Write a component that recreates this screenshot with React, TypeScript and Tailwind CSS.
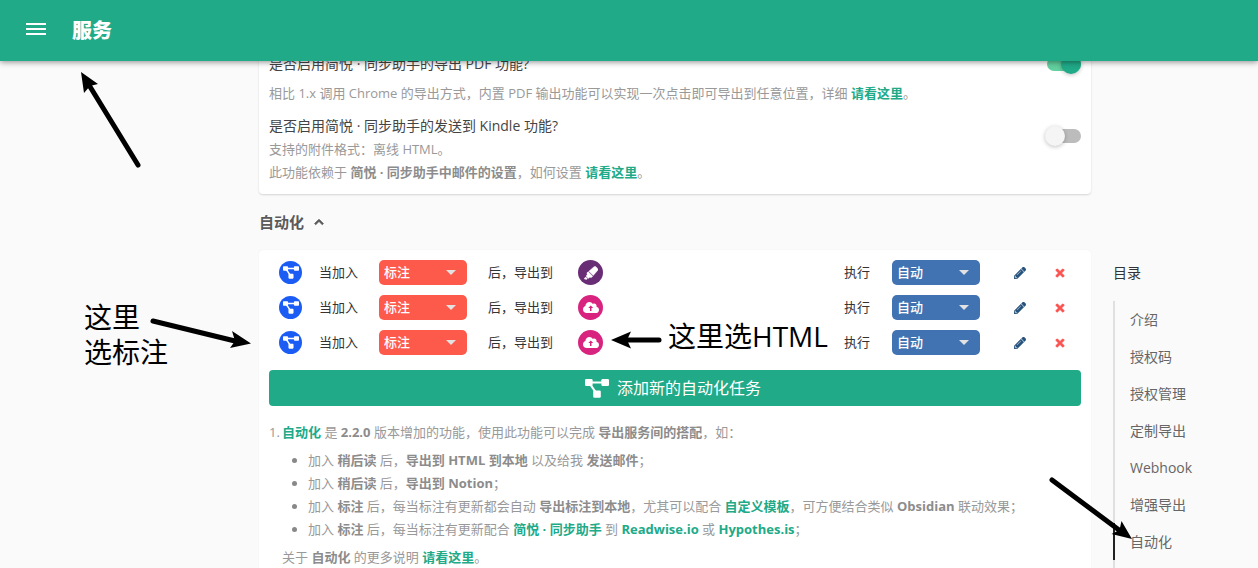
import type { ReactNode } from "react";
import { FaChevronUp, FaHighlighter, FaPencilAlt, FaTimes } from "react-icons/fa";

const tocItems = ["介绍", "授权码", "授权管理", "定制导出", "Webhook", "增强导出", "自动化"];

function FlowIcon({ className }: { className: string }) {
  return (
    <svg viewBox="0 0 24 19" className={className} fill="currentColor" stroke="currentColor" strokeWidth="0">
      <rect width="7.6" height="7" rx="1.2" />
      <rect x="16.4" width="7.6" height="7" rx="1.2" />
      <rect x="8.2" y="11.500" width="7.6" height="7.200" rx="1.2" />
      <path d="M6 3.500h12M5 5l5.500 8" strokeWidth="2.2" />
    </svg>
  );
}

function CloudIcon() {
  return (
    <svg viewBox="0 0 640 512" className="h-[13px] w-4">
      <path
        fill="currentColor"
        d="M537.6 226.6c4.1-10.7 6.4-22.4 6.4-34.6 0-53-43-96-96-96-19.7 0-38.1 6-53.3 16.2C367 64.2 315.3 32 256 32c-88.4 0-160 71.6-160 160 0 2.7.1 5.4.2 8.1C40.2 219.8 0 273.2 0 336c0 79.5 64.5 144 144 144h368c70.7 0 128-57.3 128-128 0-61.9-44-113.6-102.4-125.4z"
      />
      <path fill="#d8247f" d="M310 180l100 100h-70v120h-60V280h-70z" />
    </svg>
  );
}

function B({ children }: { children: ReactNode }) {
  return <b className="font-bold text-[#8c8c8c]">{children}</b>;
}

function Link({ children }: { children: ReactNode }) {
  return (
    <a href="#more" className="font-bold text-[#20aa88]">
      {children}
    </a>
  );
}

function Toggle({ id, on }: { id: string; on?: boolean }) {
  return (
    <span className="relative flex h-5 w-9 shrink-0 items-center justify-end">
      <input
        id={id}
        type="checkbox"
        role="switch"
        defaultChecked={on}
        className="peer h-3.5 w-[34px] appearance-none rounded-full bg-[#bcbcbc] checked:bg-[#62d09f]"
      />
      <span className="pointer-events-none absolute left-0 top-0 size-5 rounded-full bg-[#f5f5f5] shadow-[0_1px_4px_rgba(0,0,0,0.25)] peer-checked:left-4 peer-checked:bg-[#20aa88]" />
    </span>
  );
}

function Picker({ label, value, options, tone }: { label: string; value: string; options: string[]; tone: string }) {
  return (
    <span className={`relative h-[25px] w-[88px] shrink-0 rounded-[5px] ${tone}`}>
      <select
        aria-label={label}
        defaultValue={value}
        className="block h-full w-full appearance-none pl-[5px] pr-6 text-[13px] font-medium text-white"
      >
        {options.map((o) => (
          <option key={o}>{o}</option>
        ))}
      </select>
      <svg viewBox="0 0 10 5" className="pointer-events-none absolute right-[11px] top-2.5 h-[5px] w-2.5 fill-[#e2e2e2]">
        <path d="M0 0h10L5 5z" />
      </svg>
    </span>
  );
}

function TaskRow({ target }: { target: "note" | "cloud" }) {
  return (
    <li className="flex h-[25px] items-center pl-2.5">
      <span className="flex size-[23px] items-center justify-center rounded-full bg-[#1b5cf5] text-white">
        <FlowIcon className="h-[13px] w-4" />
      </span>
      <span className="ml-[17px] w-[60px]">当加入</span>
      <Picker label="加入类型" value="标注" options={["标注", "稍后读"]} tone="bg-[#fd5a4b]" />
      <span className="ml-[21px] w-[90px]">后，导出到</span>
      {target === "note" ? (
        <button aria-label="标注" className="flex size-[25px] items-center justify-center rounded-full bg-[#692d76] text-white">
          <FaHighlighter className="size-3.5" strokeWidth={16} />
        </button>
      ) : (
        <button aria-label="HTML" className="flex size-[25px] items-center justify-center rounded-full bg-[#d8247f] text-white">
          <CloudIcon />
        </button>
      )}
      <span className="ml-auto w-12">执行</span>
      <Picker label="执行方式" value="自动" options={["自动", "手动"]} tone="bg-[#4172b1]" />
      <button aria-label="编辑" className="ml-[34px] text-[#27547d]">
        <FaPencilAlt className="size-3" strokeWidth={16} />
      </button>
      <button aria-label="删除" className="ml-7 mr-[15px] text-[#fb5250]">
        <FaTimes className="size-3" strokeWidth={28} />
      </button>
    </li>
  );
}

function Annotations() {
  return (
    <div className="pointer-events-none absolute inset-0 z-20 text-[28px] leading-[35px] text-black">
      <svg width="1258" height="568" className="absolute left-0 top-0" stroke="#000" strokeWidth="5" strokeLinecap="round">
        <path d="M138 165 89 85" />
        <path d="M81 72l17 12-8 2-6 7z" strokeWidth="0" />
        <path d="M153 321l82 20" />
        <path d="M251 343.500l-21 4.500 5-7-3-10z" strokeWidth="0" />
        <path d="M659 340h-31" />
        <path d="M611 340l20-8.500-4 8.500 4 8.500z" strokeWidth="0" />
        <path d="M1052 480l67 50" />
        <path d="M1132 539l-20.500-5 8-4 2-9z" strokeWidth="0" />
      </svg>
      <p className="absolute left-[84px] top-[300px] whitespace-nowrap">
        这里
        <br />
        选标注
      </p>
      <p className="absolute left-[668px] top-[319px] whitespace-nowrap">这里选HTML</p>
    </div>
  );
}

export default function App() {
  return (
    <div className="relative h-screen overflow-hidden bg-[#fafafa] font-['Open_Sans','Noto_Sans_CJK_SC',sans-serif] text-[13px] leading-[23px] text-[#333]">
      <header className="absolute inset-x-0 top-0 z-10 flex h-[61px] items-center bg-[#20aa88] pl-[26px] text-white shadow-[0_1px_6px_rgba(0,0,0,0.45)]">
        <button aria-label="菜单" className="flex w-5 flex-col gap-[3px] pb-1">
          <span className="h-0.5 bg-white" />
          <span className="h-0.5 bg-white" />
          <span className="h-0.5 bg-white" />
        </button>
        <h1 className="ml-[26px] text-xl font-black">服务</h1>
      </header>

      <div className="flex pl-[259px] pt-[52px]">
        <main className="min-w-0 flex-1">
          <section className="rounded-b-sm bg-white px-2.5 pb-2.5 text-[#999] shadow-[0_1px_2px_rgba(0,0,0,0.15)]">
            <div className="flex items-center justify-between">
              <label htmlFor="pdf" className="text-sm leading-6 text-[#444]">
                是否启用简悦 · 同步助手的导出 PDF 功能?
              </label>
              <Toggle id="pdf" on />
            </div>
            <p className="mt-1.5">
              相比 1.x 调用 Chrome 的导出方式，内置 PDF 输出功能可以实现一次点击即可导出到任意位置，详细 <Link>请看这里</Link>。
            </p>
            <div className="mt-[9px] flex justify-between">
              <div>
                <label htmlFor="kindle" className="block text-sm leading-6 text-[#444]">
                  是否启用简悦 · 同步助手的发送到 Kindle 功能?
                </label>
                <p>支持的附件格式：离线 HTML。</p>
                <p>
                  此功能依赖于 <B>简悦 · 同步助手中邮件的设置</B>，如何设置 <Link>请看这里</Link>。
                </p>
              </div>
              <div className="pt-3">
                <Toggle id="kindle" />
              </div>
            </div>
          </section>

          <h2 className="flex h-14 items-center gap-2.5 text-[15px] font-bold text-[#5a5a5a]">
            自动化
            <button aria-label="收起">
              <FaChevronUp className="size-2.5" strokeWidth={40} />
            </button>
          </h2>

          <section className="rounded-sm bg-white px-2.5 pb-12 pt-2.5 shadow-[0_0_1px_rgba(0,0,0,0.1)]">
            <ul className="flex flex-col gap-2.5">
              <TaskRow target="note" />
              <TaskRow target="cloud" />
              <TaskRow target="cloud" />
            </ul>
            <button className="mt-[15px] flex h-9 w-full items-center justify-center gap-2 rounded-sm bg-[#20aa88] pr-1 text-base text-white">
              <FlowIcon className="h-[19px] w-6" />
              添加新的自动化任务
            </button>

            <div className="mt-[15px] flex whitespace-nowrap text-[#999]">
              <span className="w-[13px]">1.</span>
              <div>
                <p>
                  <Link>自动化</Link> 是 <B>2.2.0</B> 版本增加的功能，使用此功能可以完成 <B>导出服务间的搭配</B>，如：
                </p>
                <ul className="my-[5px] list-disc pl-[26px] marker:text-[#888]">
                  <li>
                    加入 <B>稍后读</B> 后，<B>导出到 HTML 到本地</B> 以及给我 <B>发送邮件</B>；
                  </li>
                  <li>
                    加入 <B>稍后读</B> 后，<B>导出到 Notion</B>；
                  </li>
                  <li>
                    加入 <B>标注</B> 后，每当标注有更新都会自动 <B>导出标注到本地</B>，尤其可以配合 <Link>自定义模板</Link>，可方便结合类似 <B>Obsidian</B> 联动效果；
                  </li>
                  <li>
                    加入 <B>标注</B> 后，每当标注有更新配合 <Link>简悦 · 同步助手</Link> 到 <Link>Readwise.io</Link> 或 <Link>Hypothes.is</Link>；
                  </li>
                </ul>
                <p>
                  关于 <B>自动化</B> 的更多说明 <Link>请看这里</Link>。
                </p>
              </div>
            </div>
          </section>
        </main>

        <nav aria-label="目录" className="ml-[22px] w-[145px] shrink-0 pt-[209px] text-sm">
          <h2 className="mb-[17px] leading-[23px] text-[#333]">目录</h2>
          <ul>
            {tocItems.map((item, i) => (
              <li
                key={item}
                className={`flex h-[37px] items-center border-l-2 pl-[15px] ${
                  i === tocItems.length - 1 ? "border-[#222]" : "border-[#e0e0e0]"
                }`}
              >
                <a href="#toc" className="text-[#666]">
                  {item}
                </a>
              </li>
            ))}
            <li className="h-9 border-l-2 border-[#e0e0e0]" />
          </ul>
        </nav>
      </div>
      <Annotations />
    </div>
  );
}
